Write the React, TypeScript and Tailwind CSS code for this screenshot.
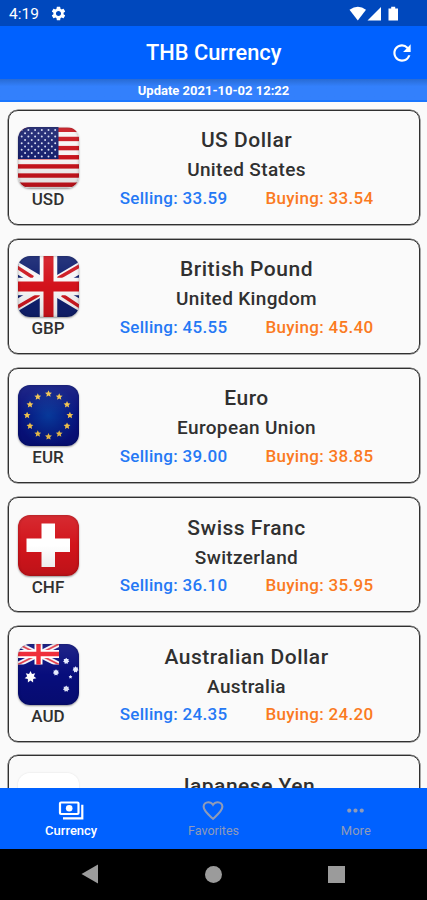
import type { ReactNode } from "react";
import { MdMoreHoriz, MdRefresh, MdSettings } from "react-icons/md";

interface Rate {
  code: string;
  name: string;
  country: string;
  selling: string;
  buying: string;
  flag: ReactNode;
}

function starPoints(cx: number, cy: number, outer: number, inner: number, tips: number) {
  return Array.from({ length: tips * 2 }, (_, i) => {
    const r = i % 2 === 0 ? outer : inner;
    const a = (Math.PI * i) / tips - Math.PI / 2;
    return `${cx + r * Math.cos(a)},${cy + r * Math.sin(a)}`;
  }).join(" ");
}

function UsFlag() {
  return (
    <>
      <rect width="61" height="61" fill="#f7f4f4" />
      {[0, 1, 2, 3, 4, 5, 6].map((i) => (
        <rect key={i} y={i * 9.15 + 0.6} width="61" height="4.4" fill="#c8141d" />
      ))}
      <rect width="40.5" height="32" fill="#17206e" />
      {Array.from({ length: 9 }).map((_, row) =>
        Array.from({ length: row % 2 ? 5 : 6 }).map((_, col) => (
          <circle
            key={`${row}-${col}`}
            cx={3.7 + col * 6.7 + (row % 2 ? 3.35 : 0)}
            cy={3 + row * 3.3}
            r="1"
            fill="#d5daf0"
          />
        )),
      )}
    </>
  );
}

function UkFlag() {
  return (
    <>
      <rect width="61" height="61" fill="#10206f" />
      <path d="M-4 10 65 51M65 10-4 51" stroke="#f6f5f6" strokeWidth="11" />
      <path d="M-2 10.5 15 21.5M63 51.5 44 39" stroke="#ce1820" strokeWidth="3.4" />
      <path d="M63 9 38 23.5M-2 52 22 38" stroke="#ce1820" strokeWidth="3.4" />
      <path d="M30.5 0V61M0 30.5H61" stroke="#f8f7f7" strokeWidth="17.5" />
      <path d="M30.5 0V61M0 30.5H61" stroke="#d3121b" strokeWidth="10" />
    </>
  );
}

function EuFlag() {
  return (
    <>
      <defs>
        <radialGradient id="eu-field">
          <stop offset="0" stopColor="#07399a" />
          <stop offset="1" stopColor="#07107c" />
        </radialGradient>
      </defs>
      <rect width="61" height="61" fill="url(#eu-field)" />
      {Array.from({ length: 12 }).map((_, i) => {
        const a = (Math.PI * i) / 6;
        return (
          <polygon
            key={i}
            points={starPoints(30.5 + 21.4 * Math.sin(a), 30.3 - 21.4 * Math.cos(a), 3.6, 1.7, 5)}
            fill="#f2c34c"
          />
        );
      })}
    </>
  );
}

function SwissFlag() {
  return (
    <>
      <rect width="61" height="61" fill="#d2141b" />
      <path d="M23.5 8.5h13.5v15h15v13.5h-15v15h-13.5v-15h-15v-13.5h15z" fill="#fff" />
    </>
  );
}

function AustralianFlag() {
  return (
    <>
      <rect width="61" height="61" fill="#070d7c" />
      <svg width="41" height="20.5" viewBox="0 0 41 20.5">
        <path d="M0 0 41 20.5M41 0 0 20.5" stroke="#f5f5fb" strokeWidth="5.5" />
        <path d="M0 0 41 20.5M41 0 0 20.5" stroke="#e33c49" strokeWidth="1.8" />
        <path d="M20.5 0V21M0 10H41" stroke="#fff" strokeWidth="8" />
        <path d="M20.5 0V21M0 10H41" stroke="#ee1f2d" strokeWidth="4.4" />
      </svg>
      <polygon points={starPoints(12.5, 33, 6, 3.4, 7)} fill="#fff" />
      <polygon points={starPoints(48.2, 17, 3.2, 2.2, 7)} fill="#e6ebff" />
      <polygon points={starPoints(38, 28.5, 3.2, 2.2, 7)} fill="#e6ebff" />
      <polygon points={starPoints(57.6, 25.5, 3.2, 2.2, 7)} fill="#e6ebff" />
      <polygon points={starPoints(52.5, 33, 2, 1.1, 5)} fill="#e6ebff" />
      <polygon points={starPoints(48.2, 44.8, 3.3, 2.3, 7)} fill="#e6ebff" />
    </>
  );
}

function JapaneseFlag() {
  return (
    <>
      <rect width="61" height="61" fill="#fff" />
      <circle cx="30.5" cy="30.5" r="15" fill="#d3121b" />
    </>
  );
}

const rates: Rate[] = [
  { code: "USD", name: "US Dollar", country: "United States", selling: "33.59", buying: "33.54", flag: <UsFlag /> },
  { code: "GBP", name: "British Pound", country: "United Kingdom", selling: "45.55", buying: "45.40", flag: <UkFlag /> },
  { code: "EUR", name: "Euro", country: "European Union", selling: "39.00", buying: "38.85", flag: <EuFlag /> },
  { code: "CHF", name: "Swiss Franc", country: "Switzerland", selling: "36.10", buying: "35.95", flag: <SwissFlag /> },
  { code: "AUD", name: "Australian Dollar", country: "Australia", selling: "24.35", buying: "24.20", flag: <AustralianFlag /> },
];

function CardFrame({ children }: { children: ReactNode }) {
  return (
    <div className="flex h-[115.4px] shrink-0 rounded-[10px] border border-[#303030] pt-[16.5px] pr-[4px] pl-[9px] shadow-[0_0_0_0.5px_#555]">
      {children}
    </div>
  );
}

function RateCard({ rate }: { rate: Rate }) {
  return (
    <CardFrame>
      <div className="flex w-[61px] shrink-0 flex-col items-center">
        <div className="relative size-[61px] overflow-hidden rounded-[12px] shadow-[0_1px_2px_rgba(0,0,0,0.4)]">
          <svg className="size-full" viewBox="0 0 61 61">
            {rate.flag}
          </svg>
          <div className="absolute inset-0 rounded-[12px] bg-linear-to-b from-white/10 via-transparent to-black/10 shadow-[inset_0_0_3px_rgba(0,0,0,0.3)]" />
        </div>
        <span className="mt-[1px] text-[17px] leading-5 font-medium text-[#303030]">{rate.code}</span>
      </div>
      <div className="flex flex-1 flex-col items-center">
        <p className="text-[21px] leading-[26px] font-medium tracking-[0.5px] text-[#303030]">{rate.name}</p>
        <p className="mt-[3px] text-[19px] leading-[28px] font-medium tracking-[0.35px] text-[#303030]">{rate.country}</p>
        <div className="mt-[3.5px] flex gap-[38px] text-[17px] leading-5 font-medium tracking-[0.3px] whitespace-nowrap">
          <span className="text-[#2478f5]">Selling: {rate.selling}</span>
          <span className="text-[#fa7a22]">Buying: {rate.buying}</span>
        </div>
      </div>
    </CardFrame>
  );
}

function StatusBar() {
  return (
    <div className="flex h-[26px] shrink-0 items-center bg-[#0048bd] pt-[1px] pl-[9px] text-white">
      <span className="pt-[3px] text-[15.5px]">4:19</span>
      <MdSettings className="ml-[11px]" size={17} />
      <svg className="ml-auto mr-[28px]" width="50" height="16" viewBox="0 0 50 16" fill="#fff">
        <path d="M0.5 3.8Q9 -2.2 17 3.8L8.8 14.5z" />
        <path d="M32 1V14.5H18.5z" />
        <path d="M39.5 2.5h2.7V.8h4v1.7H49V14.5h-9.5z" />
      </svg>
    </div>
  );
}

function TabBar() {
  return (
    <nav className="grid h-[61px] shrink-0 grid-cols-3 bg-[#0061ff] text-[12.5px] leading-4 text-[#8f9bb8]">
      <div className="flex flex-col items-center pt-[10px] text-white">
        <svg width="26" height="25" viewBox="0 0 26 25" fill="none" stroke="currentColor" strokeWidth="2.2">
          <rect x="2" y="4.5" width="18.5" height="11.5" rx="1" />
          <circle cx="11.2" cy="10.2" r="3.3" fill="currentColor" stroke="none" />
          <path d="M5 20.3h19.3V6.8" />
        </svg>
        <span className="text-[13px] font-medium">Currency</span>
      </div>
      <div className="flex flex-col items-center pt-[10px]">
        <svg width="26" height="25" viewBox="0 0 24 24" fill="none" stroke="currentColor" strokeWidth="2">
          <path d="M12 20 10.5 18.7C5.5 14.2 3 11.7 3 8.5 3 6 5 4 7.5 4 9.3 4 11 5 12 6.5 13 5 14.7 4 16.5 4 19 4 21 6 21 8.5c0 3.2-2.5 5.7-7.5 10.2z" />
        </svg>
        <span>Favorites</span>
      </div>
      <div className="flex flex-col items-center pt-[10px]">
        <MdMoreHoriz size={25} />
        <span className="text-[13px]">More</span>
      </div>
    </nav>
  );
}

export default function App() {
  return (
    <div className="flex h-[900px] w-[427px] flex-col overflow-hidden bg-[#fafafa] font-[Roboto,sans-serif]">
      <StatusBar />
      <header className="flex h-[53px] shrink-0 items-center justify-end bg-[#0061ff] pr-[12.5px] text-white">
        <h1 className="flex-1 pt-[2px] pl-[39px] text-center text-[21.8px] font-medium">THB Currency</h1>
        <MdRefresh size={26} />
      </header>
      <div className="h-[23px] shrink-0 border-b-2 border-[#1976ff] bg-[#3380fc] bg-linear-to-b from-[#286bd4] to-[#3380fc] to-35% text-center text-[13px] leading-[23px] font-bold text-white">
        Update 2021-10-02 12:22
      </div>
      <main className="flex min-h-0 flex-1 flex-col gap-[13.8px] overflow-hidden px-[7.5px] pt-[7.5px]">
        {rates.map((rate) => (
          <RateCard key={rate.code} rate={rate} />
        ))}
        <CardFrame>
          <div className="size-[61px] shrink-0 overflow-hidden rounded-[12px] shadow-[0_0_2px_rgba(0,0,0,0.12)]">
            <svg className="size-full" viewBox="0 0 61 61">
              <JapaneseFlag />
            </svg>
          </div>
          <p className="flex-1 text-center text-[21px] leading-[26px] font-medium tracking-[0.5px] text-[#303030]">
            Japanese Yen
          </p>
        </CardFrame>
      </main>
      <TabBar />
      <div className="grid h-[51px] shrink-0 grid-cols-3 bg-black">
        <svg className="mt-[15px] ml-[80px]" width="20" height="20" fill="#9b9b9b">
          <path d="M1.5 10 18 .5v19z" />
        </svg>
        <div className="mt-[17px] size-[17px] justify-self-center rounded-full bg-[#9b9b9b]" />
        <div className="mt-[17px] ml-[43px] size-[17px] bg-[#9b9b9b]" />
      </div>
    </div>
  );
}
